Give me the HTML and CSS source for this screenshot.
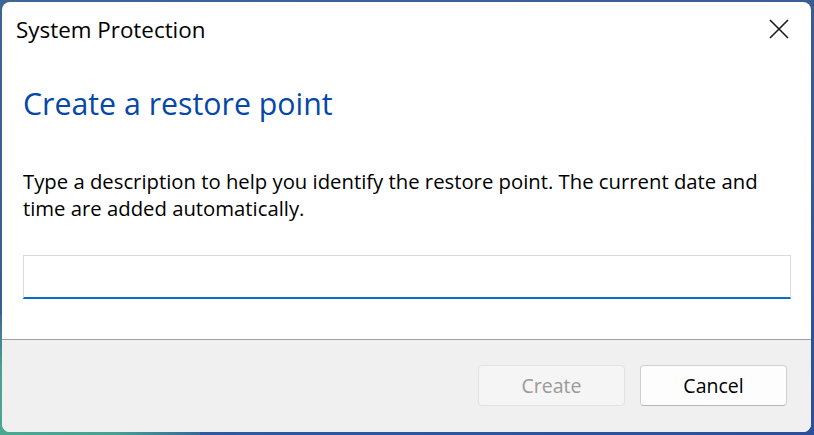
FILE: index.html
```html
<!DOCTYPE html>
<html>
<head>
<meta charset="utf-8">
<link rel="stylesheet" href="styles.css">
</head>
<body>
<div class="window">
  <div class="titlebar">
    <span class="title">System Protection</span>
    <span class="close">
      <svg width="20" height="20" viewBox="0 0 20 20"><path d="M1 1 L19 19 M19 1 L1 19" stroke="#1a1a1a" stroke-width="1.6" fill="none"/></svg>
    </span>
  </div>
  <div class="content">
    <h1 class="heading">Create a restore point</h1>
    <p class="desc">Type a description to help you identify the restore point. The current date and time are added automatically.</p>
    <div class="input"></div>
  </div>
  <div class="footer">
    <button class="btn disabled">Create</button>
    <button class="btn">Cancel</button>
  </div>
</div>
</body>
</html>
```
FILE: styles.css
```css
html, body { margin: 0; padding: 0; }
body {
  width: 814px;
  height: 435px;
  overflow: hidden;
  background: linear-gradient(160deg, #3d6596 0%, #3a5c92 45%, #2c57a0 75%, #2b4f9b 100%);
  position: relative;
  font-family: "Open Sans", "Noto Sans", sans-serif;
}
body::before {
  content: "";
  position: absolute;
  left: 0; bottom: 0;
  width: 200px; height: 120px;
  background: radial-gradient(ellipse at 0% 100%, #4aa891 0%, rgba(74,168,145,0.9) 40%, rgba(74,168,145,0) 80%);
}
.window {
  position: relative;
  margin: 2px 3px 0 2px;
  width: 809px;
  height: 430px;
  background: #ffffff;
  border-radius: 8px;
  overflow: hidden;
  display: flex;
  flex-direction: column;
}
.titlebar {
  height: 60px;
  display: flex;
  align-items: flex-start;
  justify-content: space-between;
  padding: 0 22px 0 14px;
}
.title {
  font-size: 22.4px;
  line-height: 30px;
  color: #000;
  margin-top: 13px;
}
.close {
  margin-top: 17px;
  width: 20px; height: 20px;
  display: block;
}
.close svg { display: block; }
.content {
  flex: 1;
  padding: 0 20px 0 21px;
}
.heading {
  margin: 22px 0 0 0;
  font-weight: 400;
  font-size: 30.3px;
  color: #0548a8;
  line-height: 40px;
}
.desc {
  margin: 44px 0 0 0;
  font-size: 20.3px;
  line-height: 27px;
  color: #000;
}
.input {
  margin-top: 33px;
  border: 1px solid #dadada;
  border-bottom: 2px solid #0a6ccc;
  box-sizing: border-box;
  height: 44px;
}
.footer {
  height: 93px;
  background: #f0f0f0;
  border-top: 1px solid #a0a0a0;
  display: flex;
  justify-content: flex-end;
  align-items: flex-start;
  gap: 15px;
  padding: 25px 24px 0 0;
  box-sizing: border-box;
}
.btn {
  width: 147px;
  height: 41px;
  border-radius: 4px;
  border: 1px solid #d0d0d0;
  border-bottom-color: #b8b8b8;
  background: #fdfdfd;
  font-family: "Open Sans", "Noto Sans", sans-serif;
  font-size: 19.5px;
  color: #000;
  padding: 0;
}
.btn.disabled {
  background: #f5f5f5;
  border-color: #e3e3e3;
  color: #9a9a9a;
}
```
